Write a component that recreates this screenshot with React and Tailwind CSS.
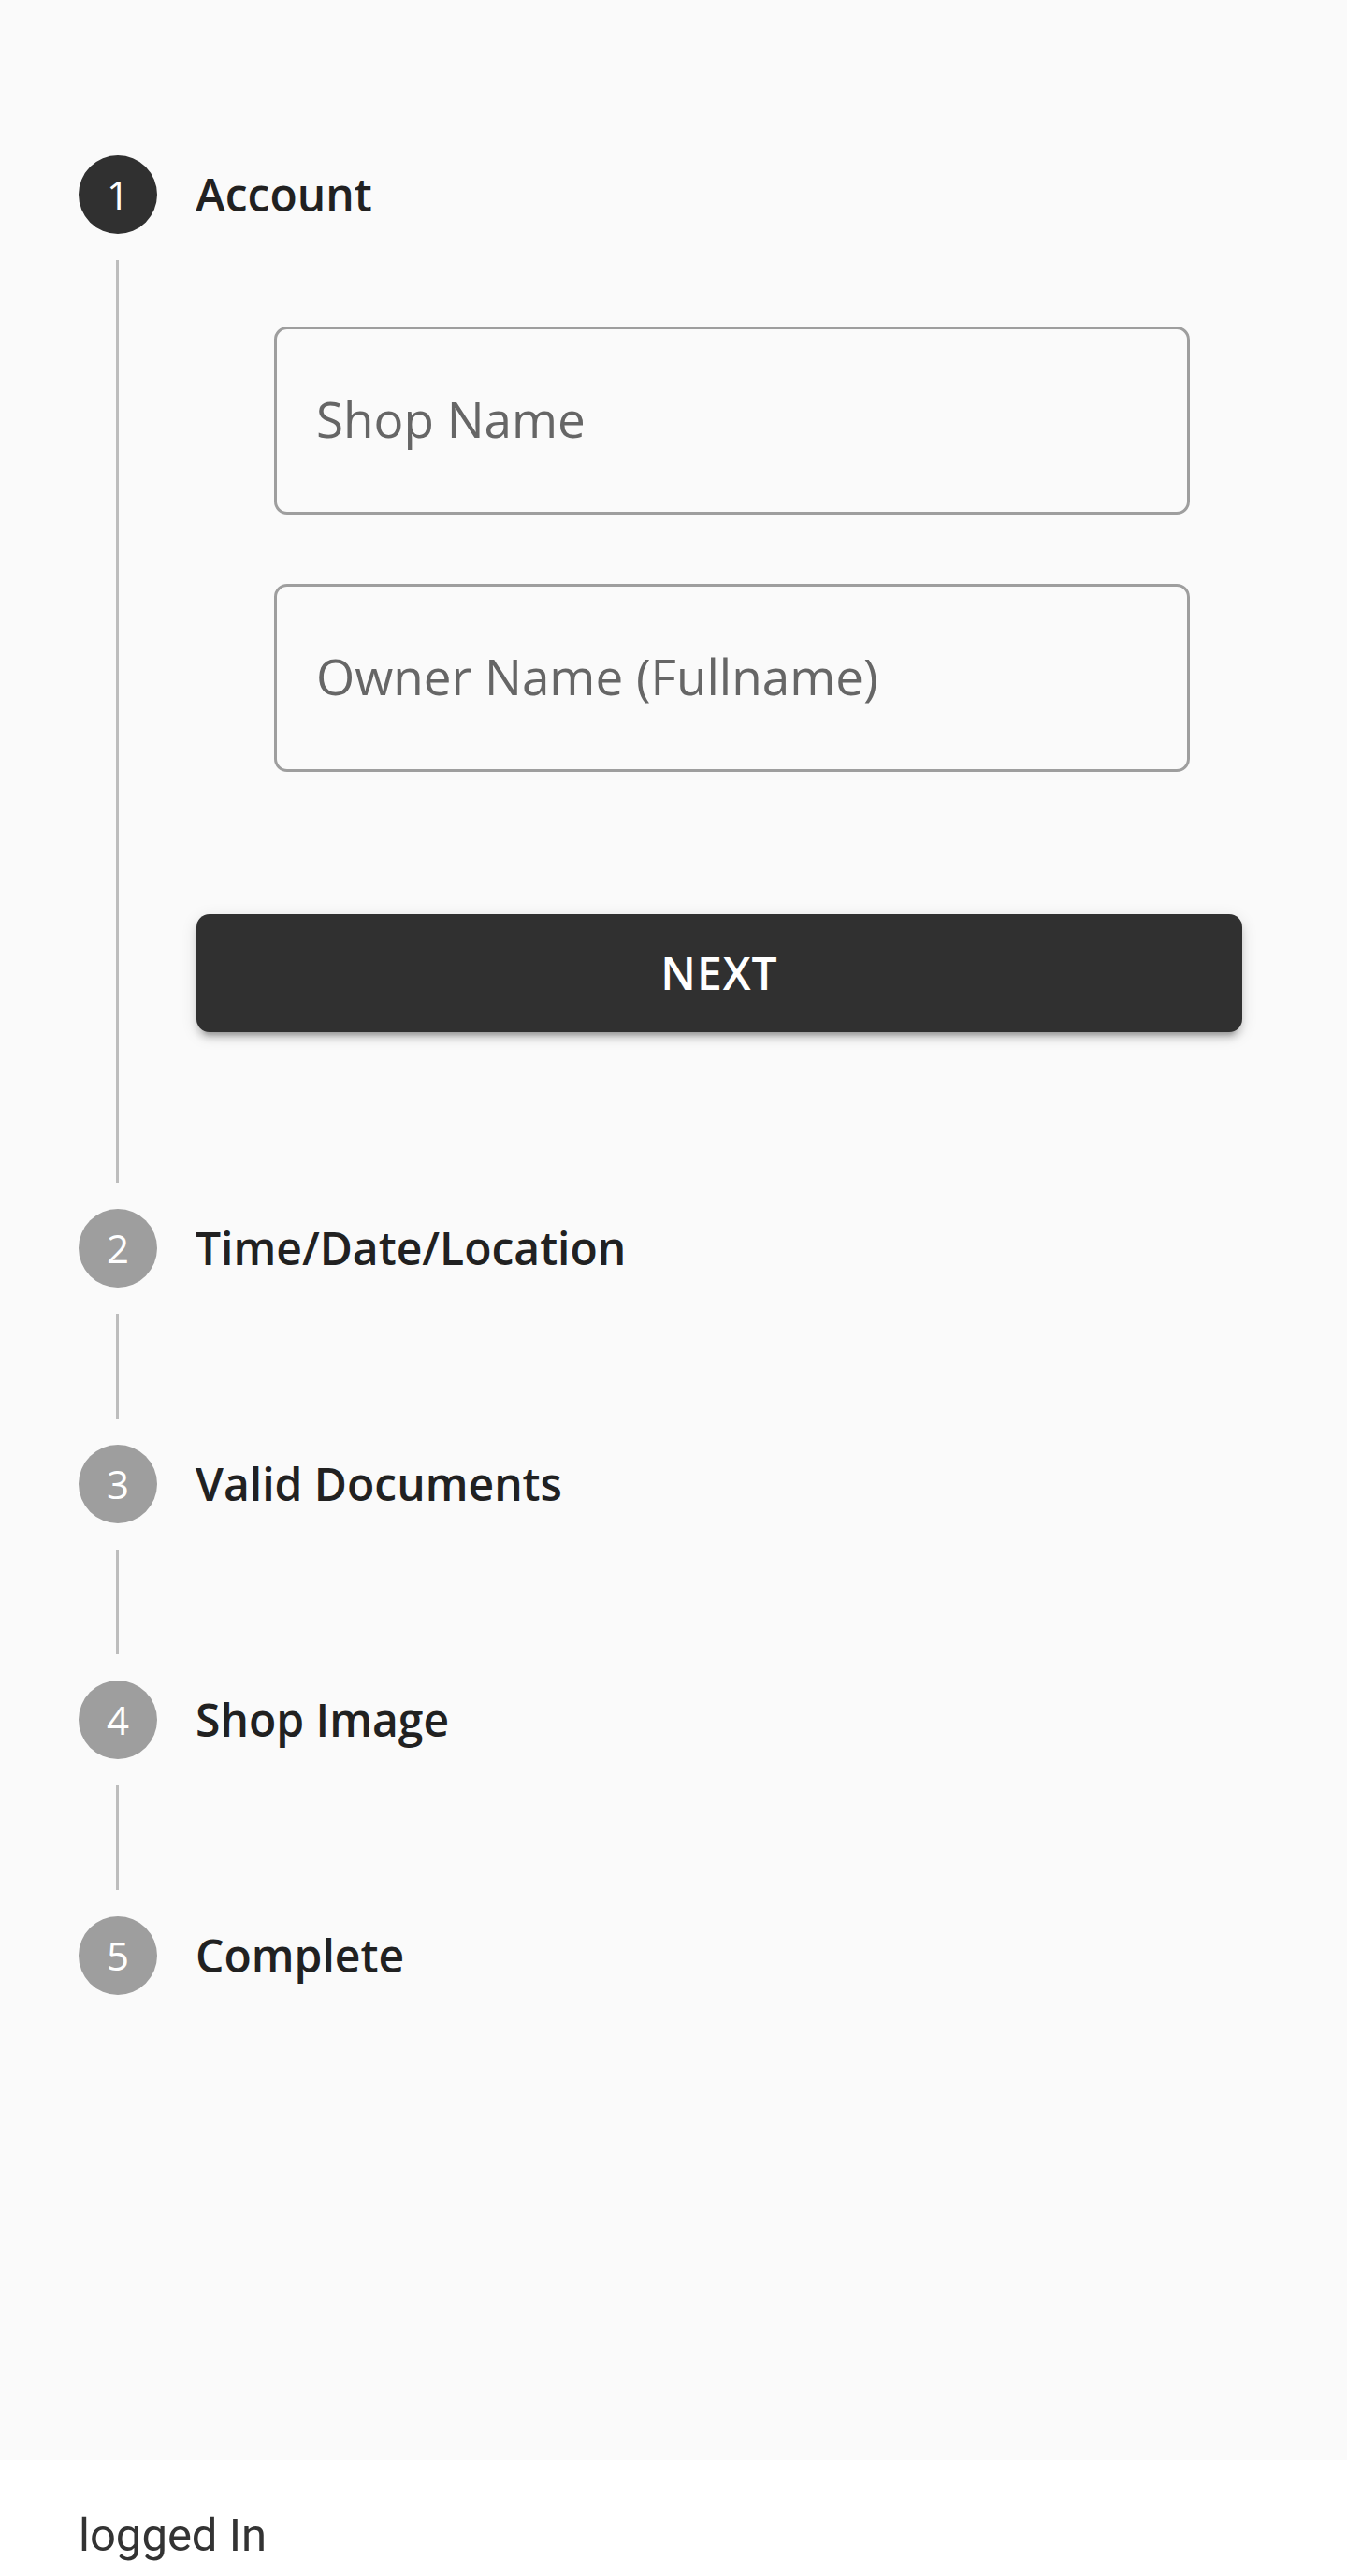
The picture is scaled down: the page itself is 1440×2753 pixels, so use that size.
import React from "react";

const steps = [
  { n: 1, label: "Account" },
  { n: 2, label: "Time/Date/Location" },
  { n: 3, label: "Valid Documents" },
  { n: 4, label: "Shop Image" },
  { n: 5, label: "Complete" },
];

const StepHead = ({ n, label, active }) => (
  <div className="flex h-[140px] items-center">
    <div
      className={
        "flex h-[84px] w-[84px] shrink-0 items-center justify-center rounded-full text-[42px] leading-none text-white " +
        (active ? "bg-[#303030]" : "bg-[#9e9e9e]")
      }
    >
      {n}
    </div>
    <span className="ml-[41px] text-[48px] font-semibold leading-none text-[#212121]">
      {label}
    </span>
  </div>
);

const Line = ({ children, className }) => (
  <div className={"ml-[40px] border-l-[3px] border-[#bdbdbd] " + className}>
    {children}
  </div>
);

const Field = ({ placeholder }) => (
  <input
    type="text"
    placeholder={placeholder}
    className="ml-[83px] block h-[201px] w-[979px] rounded-[14px] border-[3px] border-[#9e9e9e] bg-transparent px-[42px] pb-[4px] text-[53px] text-[#212121] outline-none placeholder:text-[#666666]"
  />
);

export default function App() {
  return (
    <div
      className="flex min-h-screen flex-col bg-[#fafafa]"
      style={{ fontFamily: '"Open Sans", "Noto Sans", sans-serif' }}
    >
      <div className="flex-1 px-[84px] pt-[138px]">
        <StepHead n={1} label="Account" active />
        <Line className="h-[986px] pl-[83px] pr-[28px] pt-[71px]">
          <Field placeholder="Shop Name" />
          <div className="h-[74px]" />
          <Field placeholder="Owner Name (Fullname)" />
          <button className="mt-[152px] flex h-[126px] w-full items-center justify-center rounded-[14px] bg-[#303030] text-[48px] font-semibold uppercase tracking-[1px] text-white shadow-[0_10px_4px_-7px_rgba(0,0,0,0.2),0_7px_7px_0_rgba(0,0,0,0.14),0_4px_17px_0_rgba(0,0,0,0.12)]">
            Next
          </button>
        </Line>
        {steps.slice(1).map((s, i) => (
          <div key={s.n}>
            <StepHead n={s.n} label={s.label} />
            {i < 3 && <Line className="h-[112px]" />}
          </div>
        ))}
      </div>
      <div className="h-[124px] bg-white px-[84px] pt-[44px]">
        <p
          className="text-[49px] leading-[73px] text-[#333333]"
          style={{ fontFamily: "Roboto, sans-serif" }}
        >
          logged In
        </p>
      </div>
    </div>
  );
}
